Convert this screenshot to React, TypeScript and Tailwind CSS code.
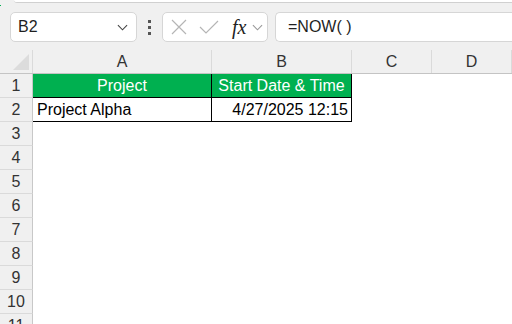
import React from 'react';

const cols = [
  { label: 'A', w: 'w-[179px]' },
  { label: 'B', w: 'w-[140px]' },
  { label: 'C', w: 'w-[80px]' },
  { label: 'D', w: 'w-[80px]' },
];

const Chevron: React.FC<{ className?: string }> = ({ className }) => (
  <svg viewBox="0 0 12 7" className={className} fill="none" stroke="currentColor" strokeWidth="1.2">
    <path d="M1 1l5 5 5-5" />
  </svg>
);

const FormulaBar: React.FC = () => (
  <div className="flex items-center h-[30px] mt-[9px] pl-[10px]">
    <div className="flex items-center w-[127px] h-full bg-white border border-[#d6d6d6] rounded-[5px] pl-[7px] pr-[8px]">
      <span className="flex-1 text-[16px] text-[#1f1f1f]">B2</span>
      <Chevron className="w-[11px] h-[7px] text-[#444]" />
    </div>
    <div className="flex flex-col gap-[3px] mx-[11px]">
      <span className="w-[3px] h-[3px] bg-[#555]" />
      <span className="w-[3px] h-[3px] bg-[#555]" />
      <span className="w-[3px] h-[3px] bg-[#555]" />
    </div>
    <div className="flex items-center w-[106px] h-full bg-white border border-[#d6d6d6] rounded-[5px] pl-[8px] pr-[3px]">
      <svg viewBox="0 0 16 16" className="w-[16px] h-[16px] text-[#b5b5b5]" fill="none" stroke="currentColor" strokeWidth="1.2">
        <path d="M1 1l14 14M15 1L1 15" />
      </svg>
      <svg viewBox="0 0 20 14" className="w-[20px] h-[14px] ml-[12px] text-[#b5b5b5]" fill="none" stroke="currentColor" strokeWidth="1.2">
        <path d="M1 7l6 6L19 1" />
      </svg>
      <span className="ml-[13px] text-[20px] leading-none italic font-['Liberation_Serif',serif] text-[#222]">fx</span>
      <Chevron className="w-[11px] h-[7px] ml-[6px] text-[#999]" />
    </div>
    <div className="flex items-center flex-1 h-full ml-[7px] bg-white border border-[#d6d6d6] border-r-0 rounded-l-[5px] pl-[12px]">
      <span className="text-[16px] text-[#1f1f1f]">=NOW( )</span>
    </div>
  </div>
);

const RowHead: React.FC<{ n: number }> = ({ n }) => (
  <div className="w-[33px] shrink-0 h-full flex items-center justify-center bg-[#f0f0f0] border-r border-[#c8c8c8] border-b border-b-[#dadada] text-[16px] text-[#333]">
    {n}
  </div>
);

export default function App() {
  const emptyRows = [3, 4, 5, 6, 7, 8, 9, 10, 11];
  return (
    <div className="w-[512px] h-[324px] overflow-hidden bg-[#f0f0f0] font-['Liberation_Sans',sans-serif] relative">
      <div className="absolute left-0 top-[5px] w-[1px] h-[1px] bg-[#00b050]" />
      <div className="ml-[14px] h-[3px] bg-white border-b border-[#d0d0d0] rounded-bl-[6px]" />
      <FormulaBar />

      <div className="mt-[8px] bg-white">
        {/* column headers */}
        <div className="flex h-[24px] bg-[#f0f0f0] border-b border-[#c4c4c4]">
          <div className="w-[33px] shrink-0 relative border-r border-[#dadada]">
            <div className="absolute right-[3px] bottom-[3px] w-0 h-0 border-l-[16px] border-l-transparent border-b-[16px] border-b-[#dcdcdc]" />
          </div>
          {cols.map((c) => (
            <div key={c.label} className={`${c.w} shrink-0 flex items-center justify-center border-r border-[#dadada] text-[16px] text-[#333]`}>
              {c.label}
            </div>
          ))}
        </div>

        {/* row 1 */}
        <div className="flex h-[24px]">
          <RowHead n={1} />
          <div className="w-[179px] shrink-0 bg-[#00b050] border-r border-black border-b flex items-center justify-center text-[16px] text-white">
            Project
          </div>
          <div className="w-[140px] shrink-0 bg-[#00b050] border-r border-black border-b flex items-center justify-center text-[16px] text-white">
            Start Date &amp; Time
          </div>
        </div>

        {/* row 2 */}
        <div className="flex h-[24px]">
          <RowHead n={2} />
          <div className="w-[179px] shrink-0 border-r border-b border-black flex items-center pl-[4px] text-[16px] text-black">
            Project Alpha
          </div>
          <div className="w-[140px] shrink-0 border-r border-b border-black flex items-center justify-end pr-[3px] text-[16px] text-black">
            4/27/2025 12:15
          </div>
        </div>

        {emptyRows.map((n) => (
          <div key={n} className="flex h-[24px]">
            <RowHead n={n} />
          </div>
        ))}
      </div>
    </div>
  );
}
